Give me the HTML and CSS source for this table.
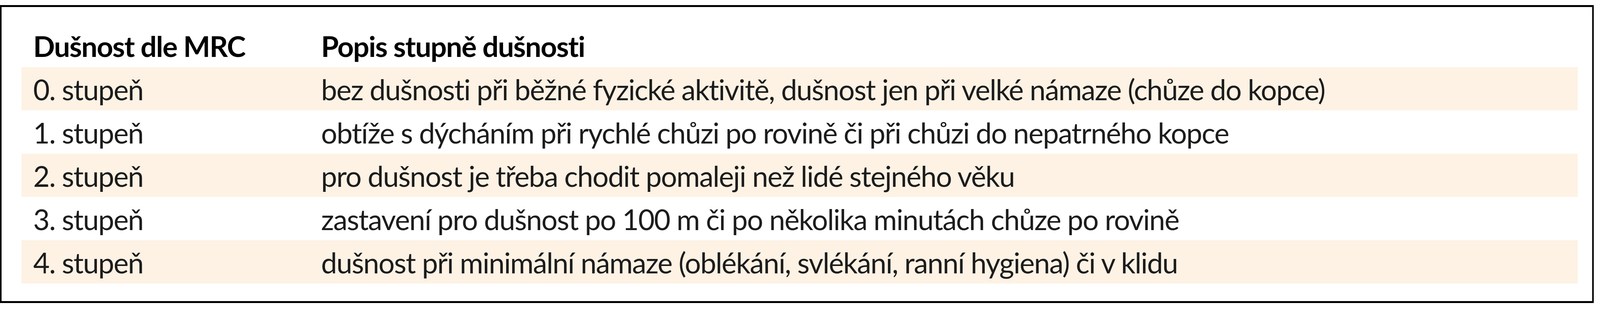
FILE: index.html
```html
<!DOCTYPE html>
<html lang="cs">
<head>
<meta charset="utf-8">
<title>Dušnost dle MRC</title>
<link rel="stylesheet" href="styles.css">
</head>
<body>
<div class="frame">
  <table class="mrc">
    <colgroup><col class="c1"><col class="c2"></colgroup>
    <thead>
      <tr><th>Dušnost dle MRC</th><th>Popis stupně dušnosti</th></tr>
    </thead>
    <tbody>
      <tr class="shade"><td>0. stupeň</td><td>bez dušnosti při běžné fyzické aktivitě, dušnost jen při velké námaze (chůze do kopce)</td></tr>
      <tr><td>1. stupeň</td><td>obtíže s dýcháním při rychlé chůzi po rovině či při chůzi do nepatrného kopce</td></tr>
      <tr class="shade"><td>2. stupeň</td><td>pro dušnost je třeba chodit pomaleji než lidé stejného věku</td></tr>
      <tr><td>3. stupeň</td><td>zastavení pro dušnost po 100 m či po několika minutách chůze po rovině</td></tr>
      <tr class="shade"><td>4. stupeň</td><td>dušnost při minimální námaze (oblékání, svlékání, ranní hygiena) či v klidu</td></tr>
    </tbody>
  </table>
</div>
</body>
</html>
```
FILE: styles.css
```css
html, body {
  margin: 0;
  padding: 0;
  background: #ffffff;
  overflow: hidden;
}
body {
  font-family: Lato, "Open Sans", "Noto Sans", sans-serif;
  color: #1c1c1c;
}
.frame {
  box-sizing: border-box;
  width: calc(100% - 16px);
  height: 764px;
  margin-top: 13px;
  border-style: solid;
  border-color: #000;
  border-width: 5px 4px;
  padding: 43px 37px 0 51px;
}
.mrc {
  width: 100%;
  border-collapse: collapse;
  border-spacing: 0;
  table-layout: fixed;
}
.mrc .c1 { width: 737px; }
.mrc th,
.mrc td {
  height: 111px;
  box-sizing: border-box;
  padding: 3px 0 0 30px;
  line-height: 108px;
  font-size: 73px;
  letter-spacing: -1.7px;
  text-align: left;
  vertical-align: top;
  white-space: nowrap;
}
.mrc th {
  font-weight: 700;
  color: #000;
}
.mrc td {
  font-weight: 400;
}
.mrc .shade td {
  background: #fdf2e4;
}
```
